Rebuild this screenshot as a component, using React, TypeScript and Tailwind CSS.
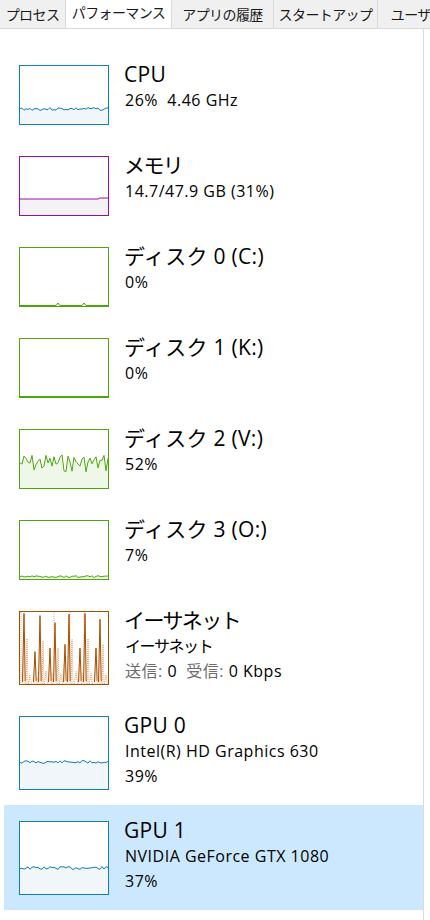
import React from 'react';

const FONT = { fontFamily: '"Open Sans", "Noto Sans CJK JP", sans-serif' };

type Graph = {
    kind: 'line' | 'flat' | 'eth';
    stroke: string;
    fill: string;
    level: number;
    amp: number;
    seed: number;
    blips?: number[];
};

interface Item {
    title: string;
    jp?: boolean;
    lines: { text: React.ReactNode; jp?: boolean }[];
    tall?: boolean;
    selected?: boolean;
    graph: Graph;
}

function rand(seed: number) {
    let s = seed;
    return () => {
        s = (s * 9301 + 49297) % 233280;
        return s / 233280;
    };
}

const BLUE = '#117dbb';
const PURPLE = '#8b12ae';
const GREEN = '#4da60c';
const BROWN = '#a74f01';

const items: Item[] = [
    { title: 'CPU', lines: [{ text: '26%  4.46 GHz' }], graph: { kind: 'line', stroke: BLUE, fill: '#f1f6fa', level: 43, amp: 1.5, seed: 3 } },
    { title: 'メモリ', jp: true, lines: [{ text: '14.7/47.9 GB (31%)' }], graph: { kind: 'flat', stroke: PURPLE, fill: '#f4f2f4', level: 42, amp: 0, seed: 1 } },
    { title: 'ディスク 0 (C:)', lines: [{ text: '0%' }], graph: { kind: 'line', stroke: GREEN, fill: '#eff7e9', level: 58, amp: 0, seed: 2, blips: [38, 64] } },
    { title: 'ディスク 1 (K:)', lines: [{ text: '0%' }], graph: { kind: 'line', stroke: GREEN, fill: '#eff7e9', level: 58, amp: 0, seed: 4 } },
    { title: 'ディスク 2 (V:)', lines: [{ text: '52%' }], graph: { kind: 'line', stroke: GREEN, fill: '#eff7e9', level: 33, amp: 9, seed: 7 } },
    { title: 'ディスク 3 (O:)', lines: [{ text: '7%' }], graph: { kind: 'line', stroke: GREEN, fill: '#eff7e9', level: 55.5, amp: 1, seed: 9 } },
    {
        title: 'イーサネット',
        jp: true,
        tall: true,
        lines: [
            { text: 'イーサネット', jp: true },
            {
                text: (
                    <>
                        <span className="text-[#6d6d6d]">送信:</span> 0  <span className="text-[#6d6d6d]">受信:</span> 0 Kbps
                    </>
                ),
            },
        ],
        graph: { kind: 'eth', stroke: BROWN, fill: '#fcf3eb', level: 0, amp: 0, seed: 5 },
    },
    {
        title: 'GPU 0',
        tall: true,
        lines: [{ text: 'Intel(R) HD Graphics 630' }, { text: '39%' }],
        graph: { kind: 'line', stroke: BLUE, fill: '#f1f6fa', level: 45, amp: 1.5, seed: 11 },
    },
    {
        title: 'GPU 1',
        tall: true,
        selected: true,
        lines: [{ text: 'NVIDIA GeForce GTX 1080' }, { text: '37%' }],
        graph: { kind: 'line', stroke: BLUE, fill: '#f1f6fa', level: 46, amp: 1.5, seed: 13 },
    },
];

// spike x positions and heights (fraction of box) for the ethernet graph
const ethSpikes: [number, number][] = [
    [4, 0.98], [15, 0.45], [20, 0.95], [30, 0.5], [35, 0.85], [45, 0.55],
    [49, 0.97], [60, 0.5], [65, 0.98], [76, 0.5], [80, 0.9],
];

function MiniGraph({ g, h }: { g: Graph; h: number }) {
    const w = 88;
    const r = rand(g.seed);

    if (g.kind === 'eth') {
        return (
            <svg width={w} height={h} viewBox={`0 0 ${w} ${h}`} className="block">
                <rect width={w} height={h} fill="#fff" />
                {[1, 34, 50, 64].map((x) => (
                    <line key={x} x1={x} y1={0} x2={x} y2={h} stroke="#e8b089" strokeWidth="1" strokeDasharray="1 1" />
                ))}
                {ethSpikes.map(([x, f]) => {
                    const top = h - f * h;
                    return (
                        <g key={x}>
                            <path d={`M${x - 2.5} ${h} L${x} ${top} L${x + 2.5} ${h} Z`} fill="#fdeadb" />
                            <path d={`M${x - 1.5} ${h - 2} L${x} ${top} L${x + 1.2} ${h - 3}`} fill="none" stroke={g.stroke} strokeWidth="1" />
                            <path d={`M${x + 2} ${h} L${x + 3} ${top + h * 0.35} L${x + 4} ${h}`} fill="none" stroke="#d98a50" strokeWidth="0.8" strokeDasharray="1 1" />
                        </g>
                    );
                })}
                {[10, 26, 41, 56, 71, 86].map((x) => (
                    <path key={x} d={`M${x - 1.5} ${h} L${x} ${h - 6 - r() * 8} L${x + 1.5} ${h}`} fill="none" stroke="#d98a50" strokeWidth="0.8" strokeDasharray="1 1" />
                ))}
            </svg>
        );
    }

    const pts: [number, number][] = [];
    for (let x = 0; x <= w; x += 2) {
        let y = g.level + (g.amp ? (r() - 0.5) * 2 * g.amp : 0);
        if (g.kind === 'flat' && x > 78) y = g.level - 1;
        if (g.blips && g.blips.some((b) => Math.abs(b - x) < 1)) y = g.level - 3;
        pts.push([x, Math.min(y, h - 0.5)]);
    }
    const line = pts.map(([x, y], i) => `${i ? 'L' : 'M'}${x} ${y.toFixed(1)}`).join(' ');
    return (
        <svg width={w} height={h} viewBox={`0 0 ${w} ${h}`} className="block">
            <rect width={w} height={h} fill="#fff" />
            <path d={`${line} L${w} ${h} L0 ${h} Z`} fill={g.fill} />
            <path d={line} fill="none" stroke={g.stroke} strokeWidth="1" />
        </svg>
    );
}

function Row({ item }: { item: Item }) {
    const h = item.tall ? 72 : 58;
    return (
        <div className={`flex items-start pl-[15px] pt-4 pb-[15px] ${item.selected ? 'bg-[#cce8ff]' : ''}`}>
            <div className="border shrink-0" style={{ borderColor: item.graph.stroke }}>
                <MiniGraph g={item.graph} h={h} />
            </div>
            <div className="ml-[15px] -mt-[5px] text-black">
                <div className={`text-[21px] leading-[28px] ${item.jp ? 'tracking-[-1.6px]' : 'tracking-[0.3px]'}`}>{item.title}</div>
                {item.lines.map((l, i) => (
                    <div
                        key={i}
                        className={`text-[16px] leading-[25px] whitespace-pre pl-[1px] ${l.jp ? 'tracking-[-1.4px]' : 'tracking-[0.5px]'}`}
                    >
                        {l.text}
                    </div>
                ))}
            </div>
        </div>
    );
}

const tabs = [
    { label: 'プロセス', w: 'w-[66px]' },
    { label: 'パフォーマンス', w: 'w-[106px]', active: true },
    { label: 'アプリの履歴', w: 'w-[102px]' },
    { label: 'スタートアップ', w: 'w-[104px]' },
    { label: 'ユーザー', w: 'w-[80px]' },
];

export default function App() {
    return (
        <div className="w-[430px] h-[920px] bg-white overflow-hidden relative" style={FONT}>
            <div className="flex h-[29px] bg-[#f0f0f0] border-b border-[#d9d9d9] relative z-10 overflow-hidden">
                {tabs.map((t) => (
                    <div
                        key={t.label}
                        className={`${t.w} shrink-0 flex justify-center text-[14px] tracking-[-0.6px] text-[#1a1a1a] border-r border-[#d9d9d9] ${
                            t.active ? 'bg-white h-[31px] pt-[2px]' : 'pt-[4px]'
                        }`}
                    >
                        <span className="whitespace-nowrap">{t.label}</span>
                    </div>
                ))}
            </div>
            <div className="flex">
                <div className="ml-1 w-[419px] pt-5">
                    {items.map((it) => (
                        <Row key={it.title} item={it} />
                    ))}
                </div>
                <div className="w-px bg-[#dadada] self-stretch h-[891px]" />
            </div>
        </div>
    );
}
